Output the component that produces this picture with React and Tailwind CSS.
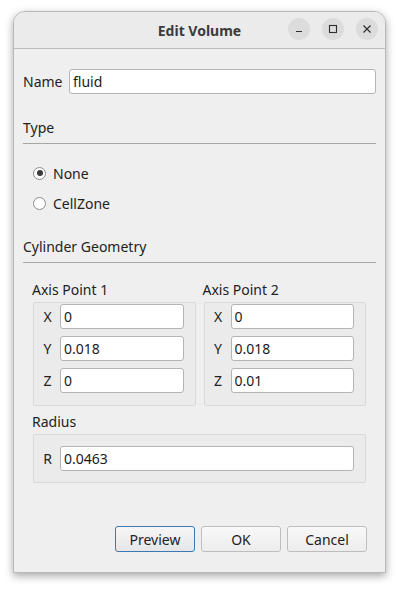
import React from 'react';

const FONT = { fontFamily: '"Noto Sans", "Open Sans", sans-serif' };

function Field({ value, className = '' }) {
  return (
    <div className={`h-[25px] flex items-center bg-white border border-[#b4b4b4] rounded-[3px] pl-[3px] text-[14px] text-[#1a1a1a] ${className}`}>
      {value}
    </div>
  );
}

function CoordRow({ label, value }) {
  return (
    <div className="flex items-center">
      <span className="w-[26px] text-center text-[14px] text-[#222] pl-[1px]">{label}</span>
      <Field value={value} className="flex-1" />
    </div>
  );
}

function AxisBox({ title, values }) {
  return (
    <div className="flex flex-col">
      <div className="h-[20px] leading-[20px] text-[14px] text-[#222] -ml-[1px]">{title}</div>
      <div className="mt-[2px] h-[104px] border border-[#d9d9d9] rounded-[2px] bg-[#ebebeb] pt-[1px] pr-[11px] flex flex-col gap-[7px]">
        <CoordRow label="X" value={values[0]} />
        <CoordRow label="Y" value={values[1]} />
        <CoordRow label="Z" value={values[2]} />
      </div>
    </div>
  );
}

function Radio({ label, checked }) {
  return (
    <div className="h-[20px] flex items-center pl-[10px]">
      <div className="w-[13px] h-[13px] rounded-full border border-[#8c8c8c] bg-white flex items-center justify-center">
        {checked && <div className="w-[6px] h-[6px] rounded-full bg-[#3a3a3a]" />}
      </div>
      <span className="ml-[7px] text-[14px] text-[#222]">{label}</span>
    </div>
  );
}

function SectionHeader({ title, className = '' }) {
  return (
    <div className={className}>
      <div className="h-[20px] leading-[20px] text-[14px] text-[#222]">{title}</div>
      <div className="mt-[5px] h-px bg-[#a6a6a6]" />
    </div>
  );
}

function TitleButton({ children }) {
  return (
    <div className="w-[22px] h-[22px] rounded-full bg-[#dcdcdc] flex items-center justify-center text-[#2e2e2e]">
      {children}
    </div>
  );
}

export default function App() {
  return (
    <div className="w-[399px] h-[589px] bg-white pt-[11px] pl-[13px]" style={FONT}>
      <div className="w-[373px] h-[562px] bg-[#efefef] rounded-t-[12px] border border-[#b8b8b8] shadow-[0_3px_8px_rgba(0,0,0,0.35)] flex flex-col overflow-hidden">
        {/* title bar */}
        <div className="relative h-[37px] bg-[#ebebeb] border-b border-[#bcbcbc] flex items-center justify-center shrink-0">
          <span className="text-[14px] font-bold text-[#3b3b3b]">Edit Volume</span>
          <div className="absolute right-[7px] top-[6px] flex gap-[12px]">
            <TitleButton>
              <svg width="10" height="10" viewBox="0 0 10 10"><path d="M2 7.5h6" stroke="currentColor" strokeWidth="1.2" /></svg>
            </TitleButton>
            <TitleButton>
              <svg width="10" height="10" viewBox="0 0 10 10"><rect x="1.5" y="1.5" width="7" height="7" fill="none" stroke="currentColor" strokeWidth="1.1" /></svg>
            </TitleButton>
            <TitleButton>
              <svg width="10" height="10" viewBox="0 0 10 10"><path d="M1.5 1.5l7 7M8.5 1.5l-7 7" stroke="currentColor" strokeWidth="1.2" /></svg>
            </TitleButton>
          </div>
        </div>

        {/* body */}
        <div className="flex-1 flex flex-col px-[9px]">
          <div className="mt-[20px] flex items-center">
            <span className="w-[46px] text-[14px] text-[#222]">Name</span>
            <Field value="fluid" className="flex-1" />
          </div>

          <SectionHeader title="Type" className="mt-[24px]" />
          <div className="mt-[19px] flex flex-col gap-[10px]">
            <Radio label="None" checked />
            <Radio label="CellZone" />
          </div>

          <SectionHeader title="Cylinder Geometry" className="mt-[24px]" />

          <div className="px-[10px]">
            <div className="mt-[17px] grid grid-cols-2 gap-[8px]">
              <AxisBox title="Axis Point 1" values={['0', '0.018', '0']} />
              <AxisBox title="Axis Point 2" values={['0', '0.018', '0.01']} />
            </div>

            <div className="mt-[6px] h-[20px] leading-[20px] text-[14px] text-[#222] -ml-[1px]">Radius</div>
            <div className="mt-[2px] h-[49px] border border-[#d9d9d9] rounded-[2px] bg-[#ebebeb] pr-[11px] flex items-center">
              <span className="w-[26px] text-center text-[14px] text-[#222] pl-[1px]">R</span>
              <Field value="0.0463" className="flex-1" />
            </div>
          </div>

          <div className="mt-auto mb-[20px] pr-[9px] flex justify-end gap-[6px]">
            <button className="w-[80px] h-[26px] rounded-[3px] border border-[#3d78b0] bg-gradient-to-b from-[#f6f6f6] to-[#e4e6e8] text-[14px] text-[#222]">Preview</button>
            <button className="w-[80px] h-[26px] rounded-[3px] border border-[#bdbdbd] bg-gradient-to-b from-[#f8f8f8] to-[#ececec] text-[14px] text-[#222]">OK</button>
            <button className="w-[80px] h-[26px] rounded-[3px] border border-[#bdbdbd] bg-gradient-to-b from-[#f8f8f8] to-[#ececec] text-[14px] text-[#222]">Cancel</button>
          </div>
        </div>
      </div>
    </div>
  );
}
